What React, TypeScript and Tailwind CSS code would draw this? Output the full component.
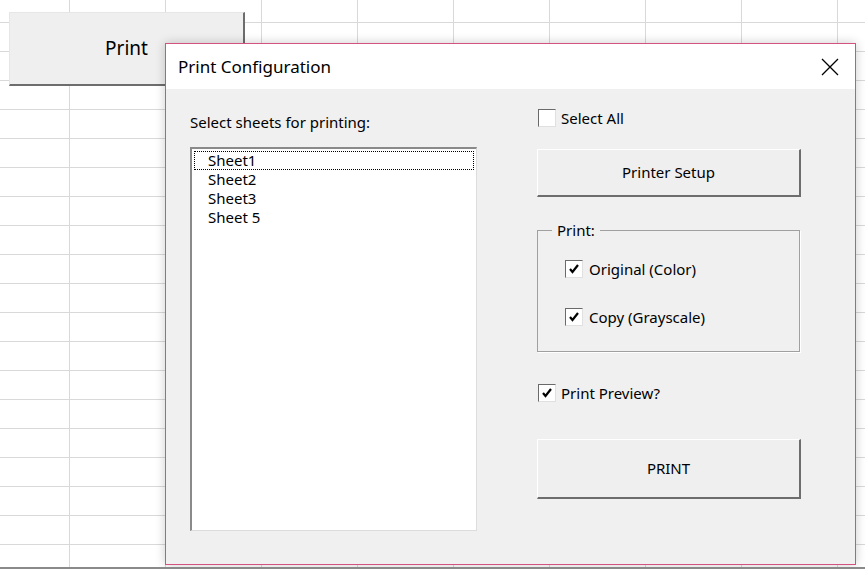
import React from "react";

const font = { fontFamily: "'Noto Sans', 'Open Sans', sans-serif" };

function Check({ checked }: { checked: boolean }) {
  return (
    <span className="w-[18px] h-[18px] bg-white border border-[#6a6a6a] border-r-[#e0e0e0] border-b-[#e0e0e0] flex items-center justify-center shrink-0">
      {checked && (
        <svg width="12" height="12" viewBox="0 0 12 12">
          <path d="M2 6 L4.5 9 L10 2" stroke="#000" strokeWidth="2.2" fill="none" />
        </svg>
      )}
    </span>
  );
}

function Btn({ label, h }: { label: string; h: string }) {
  return (
    <div className={`w-[264px] ${h} bg-[#efefef] border border-white border-r-2 border-b-2 border-r-[#6d6d6d] border-b-[#6d6d6d] flex items-center justify-center text-[15px] text-black`}>
      {label}
    </div>
  );
}

export default function App() {
  return (
    <div
      className="relative w-[865px] h-[569px] overflow-hidden bg-white bg-[linear-gradient(to_right,#d9d9d9_1px,transparent_1px),linear-gradient(to_bottom,#d9d9d9_1px,transparent_1px)] bg-[size:96px_29px] bg-[position:69px_22px] border-b-2 border-b-[#8a8a8a]"
      style={font}
    >
      <div className="absolute left-[9px] top-[12px] w-[236px] h-[74px] bg-[#efefef] border border-[#e6e6e6] border-r-2 border-b-2 border-r-[#6d6d6d] border-b-[#6d6d6d] flex items-center justify-center text-[19px] text-black">
        Print
      </div>
      <div className="absolute left-[165px] top-[43px] w-[691px] h-[522px] border border-[#d4527f] bg-[#f0f0f0] shadow-[0_0_10px_rgba(0,0,0,0.2)] flex flex-col">
        <div className="h-[45px] bg-white flex items-center justify-between pl-[12px] pr-[16px] text-[17px] text-black shrink-0">
          <span>Print Configuration</span>
          <svg width="18" height="18" viewBox="0 0 18 18">
            <path d="M1 1 L17 17 M17 1 L1 17" stroke="#000" strokeWidth="1.3" />
          </svg>
        </div>
        <div className="flex flex-1 pl-[24px] pt-[23px]">
          <div className="flex flex-col w-[287px]">
            <div className="text-[15px] text-black h-[20px] leading-[20px]">Select sheets for printing:</div>
            <div className="mt-[15px] h-[384px] bg-white border-l-2 border-t-2 border-[#8a8a8a] border-r border-b border-r-[#dcdcdc] border-b-[#dcdcdc] pt-[2px] px-[2px] text-[15px] leading-[19px] text-black">
              <div className="border border-dotted border-black pl-[13px] leading-[17px] h-[19px]">Sheet1</div>
              <div className="pl-[14px]">Sheet2</div>
              <div className="pl-[14px]">Sheet3</div>
              <div className="pl-[14px]">Sheet 5</div>
            </div>
          </div>
          <div className="flex flex-col ml-[60px] mt-[-4px] text-[15px] text-black">
            <div className="flex items-center gap-[5px] h-[20px] pl-[1px]">
              <Check checked={false} />
              <span>Select All</span>
            </div>
            <div className="mt-[21px]">
              <Btn label="Printer Setup" h="h-[48px]" />
            </div>
            <div className="relative mt-[33px] w-[263px] h-[122px] border border-[#a0a0a0] shadow-[1px_1px_0_#fff]">
              <span className="absolute left-[14px] top-[-12px] bg-[#f0f0f0] px-[5px] leading-[22px]">Print:</span>
              <div className="flex flex-col gap-[28px] pl-[27px] pt-[28px]">
                <div className="flex items-center gap-[6px] h-[20px]">
                  <Check checked />
                  <span>Original (Color)</span>
                </div>
                <div className="flex items-center gap-[6px] h-[20px]">
                  <Check checked />
                  <span>Copy (Grayscale)</span>
                </div>
              </div>
            </div>
            <div className="flex items-center gap-[5px] h-[20px] mt-[31px] pl-[1px]">
              <Check checked />
              <span>Print Preview?</span>
            </div>
            <div className="mt-[36px]">
              <Btn label="PRINT" h="h-[60px]" />
            </div>
          </div>
        </div>
      </div>
    </div>
  );
}
